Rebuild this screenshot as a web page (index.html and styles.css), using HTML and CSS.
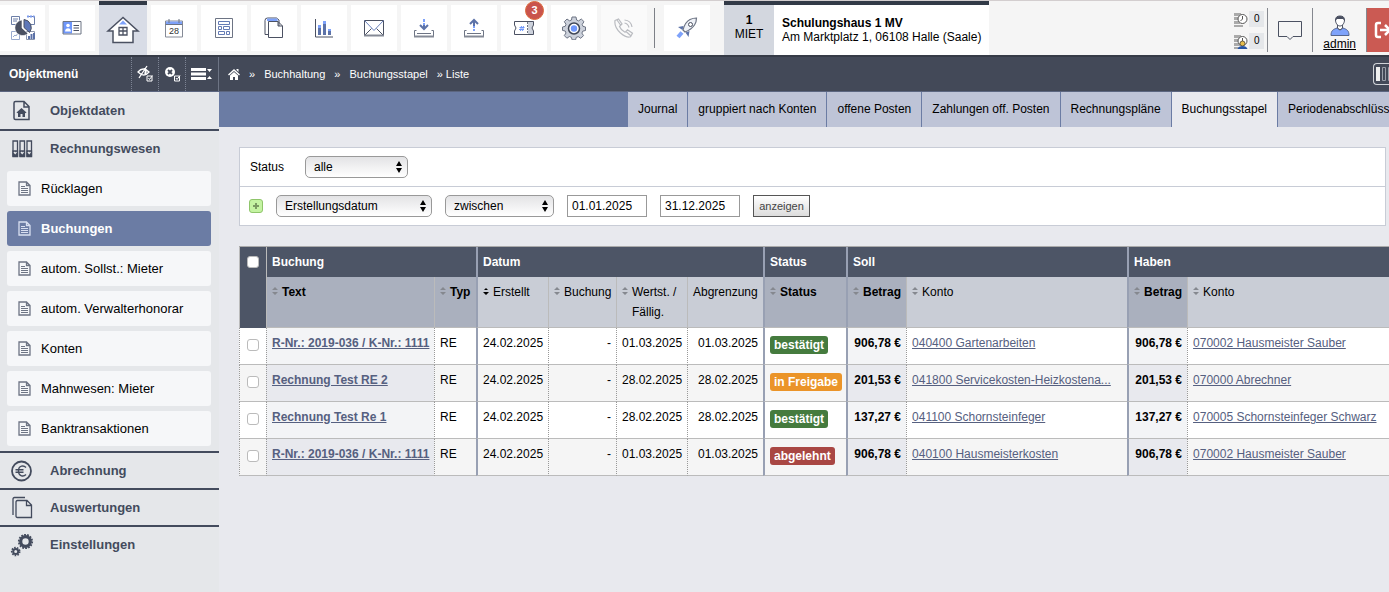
FILE: index.html
```html
<!DOCTYPE html>
<html lang="de">
<head>
    <meta charset="UTF-8">
    <meta name="viewport" content="width=device-width, initial-scale=1.0">
    <title>Buchungsstapel</title>
    <link rel="stylesheet" href="styles.css">
</head>
<body>
    <!-- shared symbols -->
    <svg class="symbols" aria-hidden="true">
        <symbol id="doc" viewBox="0 0 13 15">
            <path d="M1 1h7.500l3.500 3.500V14H1z M8.500 1v3.500H12" fill="none" stroke="currentColor" stroke-width="1.300"/>
            <path d="M3 5.500h4M3 7.500h7M3 9.500h7M3 11.500h7" stroke="currentColor"/>
        </symbol>
        <symbol id="arrows" viewBox="0 0 6 12">
            <path d="M3 0l3 5H0zM3 12l3-5H0z"/>
        </symbol>
        <symbol id="sort" viewBox="0 0 6 9">
            <path d="M3 0l3 3H0zM3 8l3-3H0z"/>
        </symbol>
        <symbol id="sort-desc" viewBox="0 0 6 9">
            <path d="M3 1l2 2H1zM3 8l3-3H0z"/>
        </symbol>
        <symbol id="clock" viewBox="0 0 14 15">
            <path d="M0 1h7v3H0zM0 5h6v3H0zM0 9h6v3H0zM0 13h9v2H0z" fill="#aaa"/>
            <circle cx="8.500" cy="7" r="4.500" fill="#fff" stroke="#555"/>
            <path d="M8.500 4v3l-2 2" fill="none" stroke="#555"/>
        </symbol>
    </svg>

    <header class="topbar">
        <nav class="tiles">
            <a href="#" class="tile first" aria-label="Dashboard">
                <svg width="26" height="26" viewBox="0 0 26 26" fill="none" stroke="#8d97ad">
                    <path d="M1.500 1.500h8v8h-8zM3 4h5M3 6h4M17 1.500h7.500v8h-6" stroke="#6d7fa8"/>
                    <path d="M17 1.500h7.500" stroke="#7c9cf0" stroke-width="2" stroke-dasharray="2 1"/>
                    <path d="M1.500 16.500h8v8h-8zM3 22l2-2 1 1 2-3" stroke="#9aabd0"/>
                    <path d="M16.500 16.500h8v8h-8z"/><path d="M19 24v-3M21.500 24v-5M24 24v-6" stroke="#5c72a8" stroke-width="2"/>
                    <path d="M12 13V5a7.800 7.800 0 1 0 6 13.500z" fill="#4b5162" stroke="#fff" stroke-width=".6"/>
                    <path d="M14 12.500V4.500a8 8 0 0 1 5.500 13z" fill="#5f78b8" stroke="#4b5162"/>
                </svg>
            </a>
            <a href="#" class="tile" aria-label="Kontakte">
                <svg width="20" height="16" viewBox="0 0 20 16">
                    <path d="M1 1.500h9v12H1z" fill="#6f97fb"/>
                    <path d="M1 1.500h18v12.500H1z" fill="none" stroke="#6d7484"/>
                    <circle cx="6" cy="5.500" r="1.800" fill="#fff"/><path d="M3 11.500c0-4.500 6-4.500 6 0z" fill="#fff"/>
                    <path d="M11.500 5.500H17M11.500 8H17M11.500 10.500H17" stroke="#4b5162"/>
                </svg>
            </a>
            <a href="#" class="tile active" aria-label="Objekte">
                <svg width="34" height="28" viewBox="0 0 34 28">
                    <path d="M17 1.500L2 15h5v11.500h20V15h5z" fill="#fff" stroke="#4b5162" stroke-width="1.500"/>
                    <path d="M17 4.500l-4 4h8z" fill="#7ea2fa"/>
                    <path d="M13 11.500h8v7.500h-8zM17 11.500v7.500M13 15h8" fill="none" stroke="#4b5162" stroke-width="1.300"/>
                </svg>
            </a>
            <a href="#" class="tile" aria-label="Kalender">
                <svg width="18" height="20" viewBox="0 0 18 20">
                    <path d="M.5 3h17v16H.5z" fill="#fff" stroke="#858a96"/><path d="M1 3.500h16v2.500H1z" fill="#7ea2fa"/>
                    <path d="M4 1v4M14 1v4M.5 6.500h17" stroke="#6d7484"/>
                    <text x="4" y="16" class="day">28</text>
                </svg>
            </a>
            <a href="#" class="tile" aria-label="Formulare">
                <svg width="18" height="20" viewBox="0 0 18 20" fill="none" stroke="#6d7484">
                    <path d="M.5.500h17v19H.5z"/>
                    <path d="M3.500 3.500h11v3h-11zM3.500 8.500h3v3h-3zM8.500 8.500h6v3h-6zM3.500 13.500h6v3h-6zM11.500 13.500h3v3h-3z" stroke="#647bb5"/>
                </svg>
            </a>
            <a href="#" class="tile" aria-label="Dokumente">
                <svg width="20" height="22" viewBox="0 0 20 22" fill="#fff" stroke="#4b5162">
                    <path d="M1 17.500V3.500Q1 1 3.500 1h9l2.500 2v14.500z"/><path d="M3 4V1.500h10.500V4z" fill="#7ea2fa" stroke="none"/>
                    <path d="M4.500 4.500h9.500l4.500 4.500v11.500h-14zM14 4.500V9h4.500"/>
                </svg>
            </a>
            <a href="#" class="tile" aria-label="Statistik">
                <svg width="18" height="20" viewBox="0 0 18 20">
                    <path d="M.5 1v18H18" fill="none" stroke="#4b5162"/>
                    <path d="M4.500 8v9M9.500 4v13M14.500 12v5" stroke="#5c72a8" stroke-width="3"/>
                    <path d="M4.500 7v3M9.500 3v3M14.500 11v2" stroke="#7ea2fa" stroke-width="3"/>
                </svg>
            </a>
            <a href="#" class="tile" aria-label="Nachrichten">
                <svg width="20" height="17" viewBox="0 0 20 17" fill="none" stroke="#4b5162">
                    <path d="M.5.500h19v15H.5zM.5 15.500l7-7M19.500 15.500l-7-7"/><path d="M.5.500l9.500 10 9.500-10" stroke="#6880bd"/><path d="M0 15.500h20" stroke-width="2" stroke="#858a96"/>
                </svg>
            </a>
            <a href="#" class="tile" aria-label="Import">
                <svg width="20" height="20" viewBox="0 0 20 20" fill="none">
                    <path d="M2.500 12.500h-2v6h19v-6h-2M3 15.500h14" stroke="#6d7484"/><path d="M0 18.500h20" stroke="#858a96" stroke-width="2"/>
                    <path d="M10 1v3M10 5v2" stroke="#7ea2fa" stroke-width="2"/><path d="M10 7v4M6 7l4 4 4-4" stroke="#5c72a8" stroke-width="2"/>
                </svg>
            </a>
            <a href="#" class="tile" aria-label="Export">
                <svg width="20" height="20" viewBox="0 0 20 20" fill="none">
                    <path d="M2.500 12.500h-2v6h19v-6h-2M3 15.500h14" stroke="#6d7484"/><path d="M0 18.500h20" stroke="#858a96" stroke-width="2"/>
                    <path d="M10 8v2M10 11v2" stroke="#7ea2fa" stroke-width="2"/><path d="M10 8V2M6 6l4-4 4 4" stroke="#5c72a8" stroke-width="2"/>
                </svg>
            </a>
            <a href="#" class="tile" aria-label="Tickets">
                <svg width="20" height="16" viewBox="0 0 20 16">
                    <path d="M14 1h5.500v4q-3 3 0 6v4H14z" fill="#ccd1db"/>
                    <path d="M.5 1.500h19V5q-3 3 0 6v3.500H.5V11q3-3 0-6z" fill="none" stroke="#4b5162"/>
                    <path d="M13.500 2v12" stroke="#6d7484" stroke-dasharray="2 1"/>
                    <path d="M7.500 6l-1 5M9.500 6l-1 5M5.500 7.500h5M5 9.500h5" stroke="#6f97fb"/>
                </svg>
                <span class="count">3</span>
            </a>
            <a href="#" class="tile" aria-label="Einstellungen">
                <svg width="24" height="24" viewBox="0 0 24 24">
                    <path d="M10 1h4l.6 3 2 .9L19.300 3l2.700 2.700-1.800 2.700.8 2 2.500.6v3.500l-2.700.6-.9 2 1.600 2.500-2.700 2.700-2.600-1.700-2 .8-.6 2.400h-3.500l-.7-2.500-2-.8-2.500 1.700-2.600-2.600L4 17l-.8-2-2.700-.6V11l2.700-.7.8-2L2.300 5.700 5 3l2.500 1.800 2-.8z" fill="#ccd1db" stroke="#6d7484"/>
                    <circle cx="12" cy="12.500" r="5.500" fill="#fff" stroke="#3f4656" stroke-width="1.500"/><circle cx="12" cy="12.500" r="3.200" fill="#6f97fb"/>
                </svg>
            </a>
            <a href="#" class="tile disabled" aria-label="Telefon">
                <svg width="20" height="20" viewBox="0 0 20 20" fill="none" stroke="#b9bbc0" stroke-width="1.200">
                    <path d="M1 2.500L4.500 1 8 6 5.500 8.500q1.500 3.800 5.500 5.800l2.500-2.500 5 3.500-2 3.500Q13 20.500 6.500 15 0 9 1 2.500zM3 2l3.500 5M12 13.500l4.500 4M10.500 2q6.500.5 7.500 7M10.500 5q3.500.5 4.500 4.500"/>
                </svg>
            </a>
            <span class="divider"></span>
            <a href="#" class="tile" aria-label="Neuigkeiten">
                <svg width="22" height="22" viewBox="0 0 22 22">
                    <path d="M7 13q2-8 7-10.500 3-1.500 6.500-1.500 0 4-2 7-3 4.500-9.500 7z" fill="#eef1f7" stroke="#6d7484" stroke-width="1.200"/>
                    <circle cx="14.500" cy="7.500" r="2" fill="#fff" stroke="#4b5162"/>
                    <path d="M7.500 9L2 10l4.500 3zM13.500 14l-1 6-3-4.500z" fill="#5c72a8"/><path d="M6 15.500l-4 4.500" stroke="#7ea2fa" stroke-width="4"/>
                </svg>
            </a>
        </nav>

        <section class="object">
            <div class="object-nr"><b>1</b>MIET</div>
            <div class="object-name"><b>Schulungshaus 1 MV</b>Am Marktplatz 1, 06108 Halle (Saale)</div>
        </section>

        <div class="user-area">
            <div class="counters">
                <a href="#"><svg width="14" height="15"><use href="#clock"/></svg><span>0</span></a>
                <a href="#"><svg width="14" height="15" viewBox="0 0 14 15"><use href="#clock" width="14" height="15"/><circle cx="8.500" cy="9.500" r="2.500" fill="#e6bd4c" stroke="#665c40"/><path d="M3.500 15q1-3 5-3t5 3z" fill="#2755a5"/></svg><span>0</span></a>
            </div>
            <a href="#" class="chat" aria-label="Feedback">
                <svg width="24" height="20" viewBox="0 0 24 20"><path d="M.5.500h23v15H15l-3 3-3-3H.5z" fill="none" stroke="#4b5162"/></svg>
            </a>
            <a href="#" class="admin">
                <svg width="20" height="21" viewBox="0 0 20 21">
                    <path d="M1 20.500c0-5 2-6 6-7.500l3 2 3-2c4 1.500 6 2.500 6 7.500z" fill="#7ea2fa" stroke="#55658c"/>
                    <path d="M7.500 10v3l2.500 2 2.500-2v-3" fill="#fff" stroke="#4b5162"/><path d="M5.500 5q0-4 4.500-4t4.500 4c0 3-2 6-4.500 6S5.500 8 5.500 5z" fill="#fff" stroke="#4b5162"/>
                    <path d="M5.500 6V4.500Q6 1 10 1t4.500 3.500V6L13 4H7z" fill="#4b5162"/>
                </svg>
                admin
            </a>
            <a href="#" class="logout" aria-label="Abmelden">
                <svg width="18" height="18" viewBox="0 0 18 18" fill="none" stroke="#fff" stroke-width="2.500"><path d="M7 2H4Q2 2 2 4v10q0 2 2 2h3M6 9h10M11 4l5 5-5 5"/></svg>
            </a>
        </div>
    </header>

    <div class="navbar">
        <div class="menu-head">
            <strong>Objektmenü</strong>
            <button class="tool" aria-label="Ausblenden">
                <svg width="18" height="18" viewBox="0 0 18 18" fill="none" stroke="#fff" stroke-width="1.300"><path d="M2 7q5-6 11 0-5 6-11 0zM11 1L3 13"/><path d="M8 4q3 1 1 5" stroke-width="2"/><path d="M11 11h5v5h-5zM12.500 13l1 1.500 3-4" stroke-width="1"/></svg>
            </button>
            <button class="tool" aria-label="Schließen">
                <svg width="18" height="18" viewBox="0 0 18 18"><circle cx="7" cy="7" r="5" fill="#fff"/><path d="M5 5l4 4M9 5L5 9" stroke="#434958" stroke-width="1.800"/><path d="M11.500 11h5v5h-5zM13 13l1 1.500 3-4" fill="none" stroke="#fff"/></svg>
            </button>
            <button class="tool wide" aria-label="Menüansicht">
                <svg width="22" height="12" viewBox="0 0 22 12" fill="#fff"><path d="M0 0h15v3H0zM0 4.500h15v3H0zM0 9h15v3H0zM16 1h5l-2.500 3zM16 11h5l-2.500-3z"/></svg>
            </button>
        </div>
        <nav class="breadcrumb">
            <a href="#" class="home" aria-label="Start"><svg width="12" height="11" viewBox="0 0 12 11" fill="#fff"><path d="M6 0l6 5.500-1 1L6 2 1 6.500l-1-1zM8.500 0h2v3l-2-2zM6 3l4 3.500V11H7V8H5v3H2V6.500z"/></svg></a>
            <span>»</span><a href="#">Buchhaltung</a>
            <span>»</span><a href="#">Buchungsstapel</a>
            <span>»</span><a href="#" class="current">Liste</a>
        </nav>
        <button class="columns" aria-label="Spalten">
            <svg width="24" height="16" viewBox="0 0 24 16" fill="none" stroke="#9ba0aa"><path d="M0 1h4v14H0z" fill="#eee" stroke="none"/><path d="M6.500 1.500h3v13h-3zM12.500 1.500h3v13h-3z"/></svg>
        </button>
    </div>

    <div class="page">
        <aside class="sidebar">
            <a href="#" class="group">
                <svg width="24" height="24" viewBox="0 0 24 24" fill="none" stroke="#434b5d" stroke-width="1.500"><path d="M5.500 2.500H14l5 5v13H5.500q-1.500 0-1.500-1.500V4q0-1.500 1.500-1.500zM14 2.500V8h5"/><path d="M11.500 9l5 4.500-.8.800-.7-.6V18h-2.500v-3h-2v3H8v-4.300l-.7.600-.8-.8z" fill="#434b5d" stroke="none"/></svg>
                Objektdaten
            </a>
            <a href="#" class="group">
                <svg width="24" height="24" viewBox="0 0 24 24" fill="none" stroke="#434b5d" stroke-width="1.300"><path d="M3 4h4.500v15.500H3zM10 4h4.500v15.500H10zM17 4h4.500v15.500H17z"/><path d="M3 14h4.500v5H3zM10 14h4.500v5H10zM17 14h4.500v5H17z" fill="#434b5d"/><path d="M4 15l1.200 1.500L6.500 15M11 15l1.200 1.500 1.300-1.500M18 15l1.200 1.500 1.300-1.500" stroke="#e5e7ea"/></svg>
                Rechnungswesen
            </a>
            <nav class="submenu">
                <a href="#"><svg width="13" height="15"><use href="#doc"/></svg>Rücklagen</a>
                <a href="#" class="selected"><svg width="13" height="15"><use href="#doc"/></svg>Buchungen</a>
                <a href="#"><svg width="13" height="15"><use href="#doc"/></svg>autom. Sollst.: Mieter</a>
                <a href="#"><svg width="13" height="15"><use href="#doc"/></svg>autom. Verwalterhonorar</a>
                <a href="#"><svg width="13" height="15"><use href="#doc"/></svg>Konten</a>
                <a href="#"><svg width="13" height="15"><use href="#doc"/></svg>Mahnwesen: Mieter</a>
                <a href="#"><svg width="13" height="15"><use href="#doc"/></svg>Banktransaktionen</a>
            </nav>
            <a href="#" class="group">
                <svg width="24" height="24" viewBox="0 0 24 24" fill="none" stroke="#434b5d"><circle cx="11.500" cy="12" r="9.500" stroke-width="1.800"/><path d="M16 8.500q-2-2-4.500-1.300C7.500 8.300 7.500 15.700 11.500 16.800q2.500.7 4.500-1.300M5.500 10.800h8M5.500 13.200h8" stroke-width="1.400"/></svg>
                Abrechnung
            </a>
            <a href="#" class="group">
                <svg width="24" height="24" viewBox="0 0 24 24" fill="none" stroke="#434b5d" stroke-width="1.300"><path d="M3 19V3q0-1.500 1.500-1.500H15"/><path d="M7.500 4.500H17l4.500 4.500v12.500H7.500Q6 21.500 6 20V6q0-1.500 1.500-1.500zM16.500 4.500V9.500h5"/></svg>
                Auswertungen
            </a>
            <a href="#" class="group">
                <svg width="24" height="24" viewBox="0 0 24 24" fill="none" stroke="#434b5d"><circle cx="15.500" cy="8.500" r="4.800" stroke-width="3.200"/><circle cx="15.500" cy="8.500" r="6.700" stroke-width="1.800" stroke-dasharray="1.800 1.200"/><circle cx="5.700" cy="18.500" r="2.500" stroke-width="2"/><circle cx="5.700" cy="18.500" r="4" stroke-width="1.600" stroke-dasharray="1.600 1.200"/></svg>
                Einstellungen
            </a>
        </aside>

        <main class="main">
            <nav class="tabs">
                <a href="#">Journal</a>
                <a href="#">gruppiert nach Konten</a>
                <a href="#">offene Posten</a>
                <a href="#">Zahlungen off. Posten</a>
                <a href="#">Rechnungspläne</a>
                <a href="#" class="selected">Buchungsstapel</a>
                <a href="#">Periodenabschlüsse</a>
            </nav>

            <form class="filter">
                <div class="filter-row">
                    <label for="status" class="status-label">Status</label>
                    <span class="select small"><select id="status"><option>alle</option></select><svg width="6" height="12"><use href="#arrows"/></svg></span>
                </div>
                <div class="filter-row">
                    <button type="button" class="add" aria-label="Filter hinzufügen"><svg width="6" height="6" viewBox="0 0 6 6"><path d="M3 0v6M0 3h6" stroke="#7a9a62" stroke-width="2"/></svg></button>
                    <span class="select large"><select aria-label="Feld"><option>Erstellungsdatum</option></select><svg width="6" height="12"><use href="#arrows"/></svg></span>
                    <span class="select medium"><select aria-label="Vergleich"><option>zwischen</option></select><svg width="6" height="12"><use href="#arrows"/></svg></span>
                    <input type="text" class="date" aria-label="von" value="01.01.2025">
                    <input type="text" class="date" aria-label="bis" value="31.12.2025">
                    <button type="button" class="show">anzeigen</button>
                </div>
            </form>

            <table class="bookings">
                <colgroup>
                    <col class="w-check"><col class="w-text"><col class="w-type"><col class="w-created"><col class="w-booked"><col class="w-value"><col class="w-period"><col class="w-status"><col class="w-amount"><col class="w-account"><col class="w-amount"><col>
                </colgroup>
                <thead>
                    <tr class="groups">
                        <th rowspan="2" class="check"><input type="checkbox" aria-label="Alle auswählen"></th>
                        <th colspan="2">Buchung</th>
                        <th colspan="4" class="start">Datum</th>
                        <th class="start">Status</th>
                        <th colspan="2" class="start">Soll</th>
                        <th colspan="2" class="start">Haben</th>
                    </tr>
                    <tr class="fields">
                        <th class="key"><svg class="sort"><use href="#sort"/></svg>Text</th>
                        <th class="key"><svg class="sort"><use href="#sort"/></svg>Typ</th>
                        <th class="start"><svg class="sort desc"><use href="#sort-desc"/></svg>Erstellt</th>
                        <th><svg class="sort"><use href="#sort"/></svg>Buchung</th>
                        <th class="two-line"><svg class="sort"><use href="#sort"/></svg>Wertst. /<br>Fällig.</th>
                        <th>Abgrenzung</th>
                        <th class="key start"><svg class="sort"><use href="#sort"/></svg>Status</th>
                        <th class="key start"><svg class="sort"><use href="#sort"/></svg>Betrag</th>
                        <th><svg class="sort"><use href="#sort"/></svg>Konto</th>
                        <th class="key start"><svg class="sort"><use href="#sort"/></svg>Betrag</th>
                        <th><svg class="sort"><use href="#sort"/></svg>Konto</th>
                    </tr>
                </thead>
                <tbody>
                    <tr>
                        <td class="check"><input type="checkbox" aria-label="Zeile 1"></td>
                        <td class="key"><a href="#">R-Nr.: 2019-036 / K-Nr.: 1111</a></td>
                        <td>RE</td>
                        <td class="start num">24.02.2025</td>
                        <td class="num">-</td>
                        <td class="num">01.03.2025</td>
                        <td class="num">01.03.2025</td>
                        <td class="start"><span class="badge green">bestätigt</span></td>
                        <td class="key start num">906,78 €</td>
                        <td><a href="#">040400 Gartenarbeiten</a></td>
                        <td class="key start num">906,78 €</td>
                        <td><a href="#">070002 Hausmeister Sauber</a></td>
                    </tr>
                    <tr>
                        <td class="check"><input type="checkbox" aria-label="Zeile 2"></td>
                        <td class="key"><a href="#">Rechnung Test RE 2</a></td>
                        <td>RE</td>
                        <td class="start num">24.02.2025</td>
                        <td class="num">-</td>
                        <td class="num">28.02.2025</td>
                        <td class="num">28.02.2025</td>
                        <td class="start"><span class="badge orange">in Freigabe</span></td>
                        <td class="key start num">201,53 €</td>
                        <td><a href="#">041800 Servicekosten-Heizkostena...</a></td>
                        <td class="key start num">201,53 €</td>
                        <td><a href="#">070000 Abrechner</a></td>
                    </tr>
                    <tr>
                        <td class="check"><input type="checkbox" aria-label="Zeile 3"></td>
                        <td class="key"><a href="#">Rechnung Test Re 1</a></td>
                        <td>RE</td>
                        <td class="start num">24.02.2025</td>
                        <td class="num">-</td>
                        <td class="num">28.02.2025</td>
                        <td class="num">28.02.2025</td>
                        <td class="start"><span class="badge green">bestätigt</span></td>
                        <td class="key start num">137,27 €</td>
                        <td><a href="#">041100 Schornsteinfeger</a></td>
                        <td class="key start num">137,27 €</td>
                        <td><a href="#">070005 Schornsteinfeger Schwarz</a></td>
                    </tr>
                    <tr>
                        <td class="check"><input type="checkbox" aria-label="Zeile 4"></td>
                        <td class="key"><a href="#">R-Nr.: 2019-036 / K-Nr.: 1111</a></td>
                        <td>RE</td>
                        <td class="start num">24.02.2025</td>
                        <td class="num">-</td>
                        <td class="num">01.03.2025</td>
                        <td class="num">01.03.2025</td>
                        <td class="start"><span class="badge red">abgelehnt</span></td>
                        <td class="key start num">906,78 €</td>
                        <td><a href="#">040100 Hausmeisterkosten</a></td>
                        <td class="key start num">906,78 €</td>
                        <td><a href="#">070002 Hausmeister Sauber</a></td>
                    </tr>
                </tbody>
            </table>
        </main>
    </div>
</body>
</html>
```
FILE: styles.css
```css
* {
    margin: 0;
    padding: 0;
    box-sizing: border-box;
}

body {
    background: #e8e9ee;
    color: #000;
    font: 12px/20px "Liberation Sans", Arial, sans-serif;
    min-height: 100vh;
    overflow-x: hidden;
    display: flex;
    flex-direction: column;
}

a {
    color: inherit;
    text-decoration: none;
}

button, input, select {
    font: inherit;
    color: inherit;
    border-radius: 0;
}

svg {
    flex: none;
}

.symbols {
    position: absolute;
    width: 0;
    height: 0;
}

/* top bar */
.topbar {
    display: flex;
    height: 55px;
    background: #f5f5f5;
    border-top: 1px solid #d3cecf;
}

.tiles {
    display: flex;
    align-items: center;
    gap: 4px;
}

.tile {
    position: relative;
    width: 46px;
    height: 46px;
    background: #fff;
    display: flex;
    align-items: center;
    justify-content: center;
}

.tile.first {
    width: 45px;
}

.tile.active {
    width: 48px;
    height: 54px;
    background: #d8dce6;
    border-top: 4px solid #323a47;
}

.tile.disabled {
    background: #fafafa;
}

.tile .day {
    font-size: 9px;
    fill: #333;
}

.count {
    position: absolute;
    top: -4px;
    right: 3px;
    width: 19px;
    height: 19px;
    border-radius: 50%;
    border: 1px solid #dd6a3c;
    background: #c9544d;
    color: #fff;
    font-size: 11px;
    font-weight: bold;
    line-height: 17px;
    text-align: center;
}

.divider {
    width: 1px;
    height: 40px;
    margin: 0 5px 0 3px;
    background: #7d8087;
}

.object {
    display: flex;
    margin-left: 14px;
    border-top: 4px solid #323a47;
    background: #fff;
    line-height: 14px;
    white-space: nowrap;
}

.object b {
    display: block;
}

.object-nr {
    width: 50px;
    padding-top: 8px;
    background: #d3d7df;
    text-align: center;
}

.object-name {
    padding: 11px 8px 0;
}

.user-area {
    display: flex;
    margin-left: auto;
    padding: 7px 0 3px;
}

.user-area > * {
    border-right: 1px solid #85888f;
}

.counters {
    display: flex;
    flex-direction: column;
    justify-content: center;
    gap: 6px;
    padding-right: 3px;
}

.counters a {
    display: flex;
    align-items: center;
    gap: 1px;
}

.counters span {
    width: 15px;
    background: #e5e7ea;
    font-size: 10px;
    line-height: 16px;
    text-align: center;
}

.chat {
    display: flex;
    align-items: center;
    padding: 2px 10px 0;
}

.admin {
    display: flex;
    flex-direction: column;
    align-items: center;
    justify-content: flex-end;
    padding: 0 10px;
    line-height: 16px;
    text-decoration: underline;
}

.user-area .logout {
    display: flex;
    align-items: center;
    width: 22px;
    padding-left: 7px;
    overflow: hidden;
    border: 0;
    background: #cb5a53;
}

/* dark bar */
.navbar {
    display: flex;
    height: 37px;
    background: #434958;
    border-top: 2px solid #363b47;
    border-bottom: 1px solid #5c6680;
    color: #fff;
}

.menu-head {
    display: flex;
    align-items: center;
    width: 219px;
    padding-left: 9px;
    border-right: 1px solid #6d7484;
}

.menu-head strong {
    flex: 1;
}

.tool {
    width: 27px;
    height: 100%;
    border: 0;
    border-left: 1px dotted #7d8494;
    background: none;
    display: flex;
    align-items: center;
    justify-content: center;
}

.tool.wide {
    width: 33px;
}

.breadcrumb {
    display: flex;
    align-items: center;
    padding-left: 9px;
    font-size: 11px;
}

.breadcrumb .home {
    display: flex;
}

.breadcrumb span {
    margin: 0 9px;
    line-height: 16px;
}

.breadcrumb .current {
    margin-left: -6px;
}

.columns {
    align-self: center;
    width: 16px;
    height: 22px;
    margin-left: auto;
    padding-left: 2px;
    overflow: hidden;
    border: 1px solid #d0d3d8;
    border-right: 0;
    border-radius: 4px 0 0 4px;
    background: none;
    display: flex;
    align-items: center;
}

/* sidebar */
.page {
    display: flex;
    flex: 1;
}

.sidebar {
    flex: none;
    width: 219px;
    background: #e5e7ea;
    font-size: 13px;
}

.group {
    display: flex;
    align-items: center;
    gap: 16px;
    height: 37px;
    padding-left: 10px;
    border-top: 2px solid #434b5d;
    color: #434b5d;
    font-weight: bold;
}

.group:first-child {
    border-top: 0;
}

.submenu {
    display: flex;
    flex-direction: column;
    gap: 5px;
    padding: 5px 8px 5px 7px;
}

.submenu a {
    display: flex;
    align-items: center;
    gap: 10px;
    height: 35px;
    padding-left: 11px;
    border-radius: 3px;
    background: #f6f7f9;
}

.submenu svg {
    color: #6d7484;
}

.submenu .selected {
    background: #6b7ca4;
    color: #fff;
    font-weight: bold;
}

.submenu .selected svg {
    color: #d8dff0;
}

/* content */
.main {
    flex: 1;
    min-width: 0;
    overflow: hidden;
}

.tabs {
    display: flex;
    height: 35px;
    padding-left: 409px;
    background: #6b7ca4;
    white-space: nowrap;
}

.tabs a {
    flex: none;
    padding: 0 10px;
    border-right: 1px solid #6b7ca4;
    background: #bec4d7;
    line-height: 35px;
}

.tabs .selected {
    background: #e8e9ee;
}

.filter {
    margin: 20px 3px 20px 20px;
    border: 1px solid #c8ccd6;
    background: #fff;
}

.filter-row {
    display: flex;
    align-items: center;
    gap: 13px;
    height: 38px;
    padding-left: 9px;
}

.filter-row + .filter-row {
    height: 39px;
    border-top: 1px solid #c8ccd6;
}

.status-label {
    width: 43px;
    padding-left: 1px;
}

.select {
    position: relative;
    height: 22px;
}

.select.small {
    width: 103px;
}

.select.medium {
    width: 109px;
}

.select.large {
    width: 156px;
}

.select select {
    display: block;
    width: 100%;
    height: 22px;
    padding: 0 8px;
    appearance: none;
    border: 1px solid #999;
    border-radius: 5px;
    background: linear-gradient(#e3e3e5, #fff);
}

.select svg {
    position: absolute;
    right: 6px;
    top: 5px;
    pointer-events: none;
}

.add {
    width: 14px;
    height: 14px;
    border: 1px solid #8fc56b;
    border-radius: 3px;
    background: #c4f3a2;
    display: flex;
    align-items: center;
    justify-content: center;
}

.date {
    width: 80px;
    height: 22px;
    padding: 0 4px;
    border: 1px solid #999;
    background: #fff;
}

.show {
    width: 57px;
    height: 22px;
    border: 1px solid #555;
    background: linear-gradient(#fff, #dcdcdc);
    color: #444;
    font-size: 11px;
}

/* table */
.bookings {
    width: calc(100% - 20px);
    margin-left: 20px;
    table-layout: fixed;
    border-collapse: separate;
    border-spacing: 0;
    border-top: 1px solid #aaa;
}

.w-check { width: 27px; }
.w-text { width: 168px; }
.w-type { width: 42px; }
.w-created { width: 72px; }
.w-booked { width: 68px; }
.w-value { width: 71px; }
.w-period { width: 76px; }
.w-status { width: 83px; }
.w-amount { width: 60px; }
.w-account { width: 221px; }

.bookings th,
.bookings td {
    padding: 5px;
    border-left: 1px solid #bbb;
    text-align: left;
    vertical-align: top;
    white-space: nowrap;
}

.bookings .start {
    border-left: 2px solid #98a0b3;
}

.bookings .check {
    padding: 9px 0 0 7px;
}

.groups th {
    background: #4d5566;
    color: #fff;
}

.bookings .fields th {
    height: 51px;
    background: #c9cdd6;
    border-bottom: 1px solid #bbb;
    font-weight: normal;
}

.bookings .fields .key {
    background: #aab0be;
    font-weight: bold;
}

.bookings .fields .two-line {
    padding-left: 15px;
}

.sort {
    width: 6px;
    height: 9px;
    margin-right: 4px;
    fill: #85888f;
}

.two-line .sort {
    margin-left: -10px;
}

.sort.desc {
    fill: #000;
}

.bookings td {
    height: 37px;
    background: #fff;
    border-left-style: dotted;
    border-left-color: #999;
    border-bottom: 1px solid #bbb;
}

.bookings td.start {
    border-left-style: solid;
}

.bookings tr:nth-child(even) td {
    background: #f5f5f5;
}

.bookings td.key {
    background: #f3f4f6;
    font-weight: bold;
}

.bookings tbody tr:nth-child(even) .key {
    background: #e8e9ee;
}

.bookings td.num {
    text-align: right;
}

.bookings td a {
    color: #566080;
    text-decoration: underline;
}

.bookings td.check {
    padding-top: 11px;
}

.check input {
    display: block;
    width: 12px;
    height: 12px;
    appearance: none;
    border: 1px solid #bbb;
    border-radius: 3px;
    background: #fff;
}

.badge {
    display: inline-block;
    margin-top: 3px;
    padding: 0 4px;
    border-radius: 3px;
    color: #fff;
    font-weight: bold;
    line-height: 18px;
}

.green { background: #457b3e; }
.orange { background: #eb9428; }
.red { background: #a94743; }
```
